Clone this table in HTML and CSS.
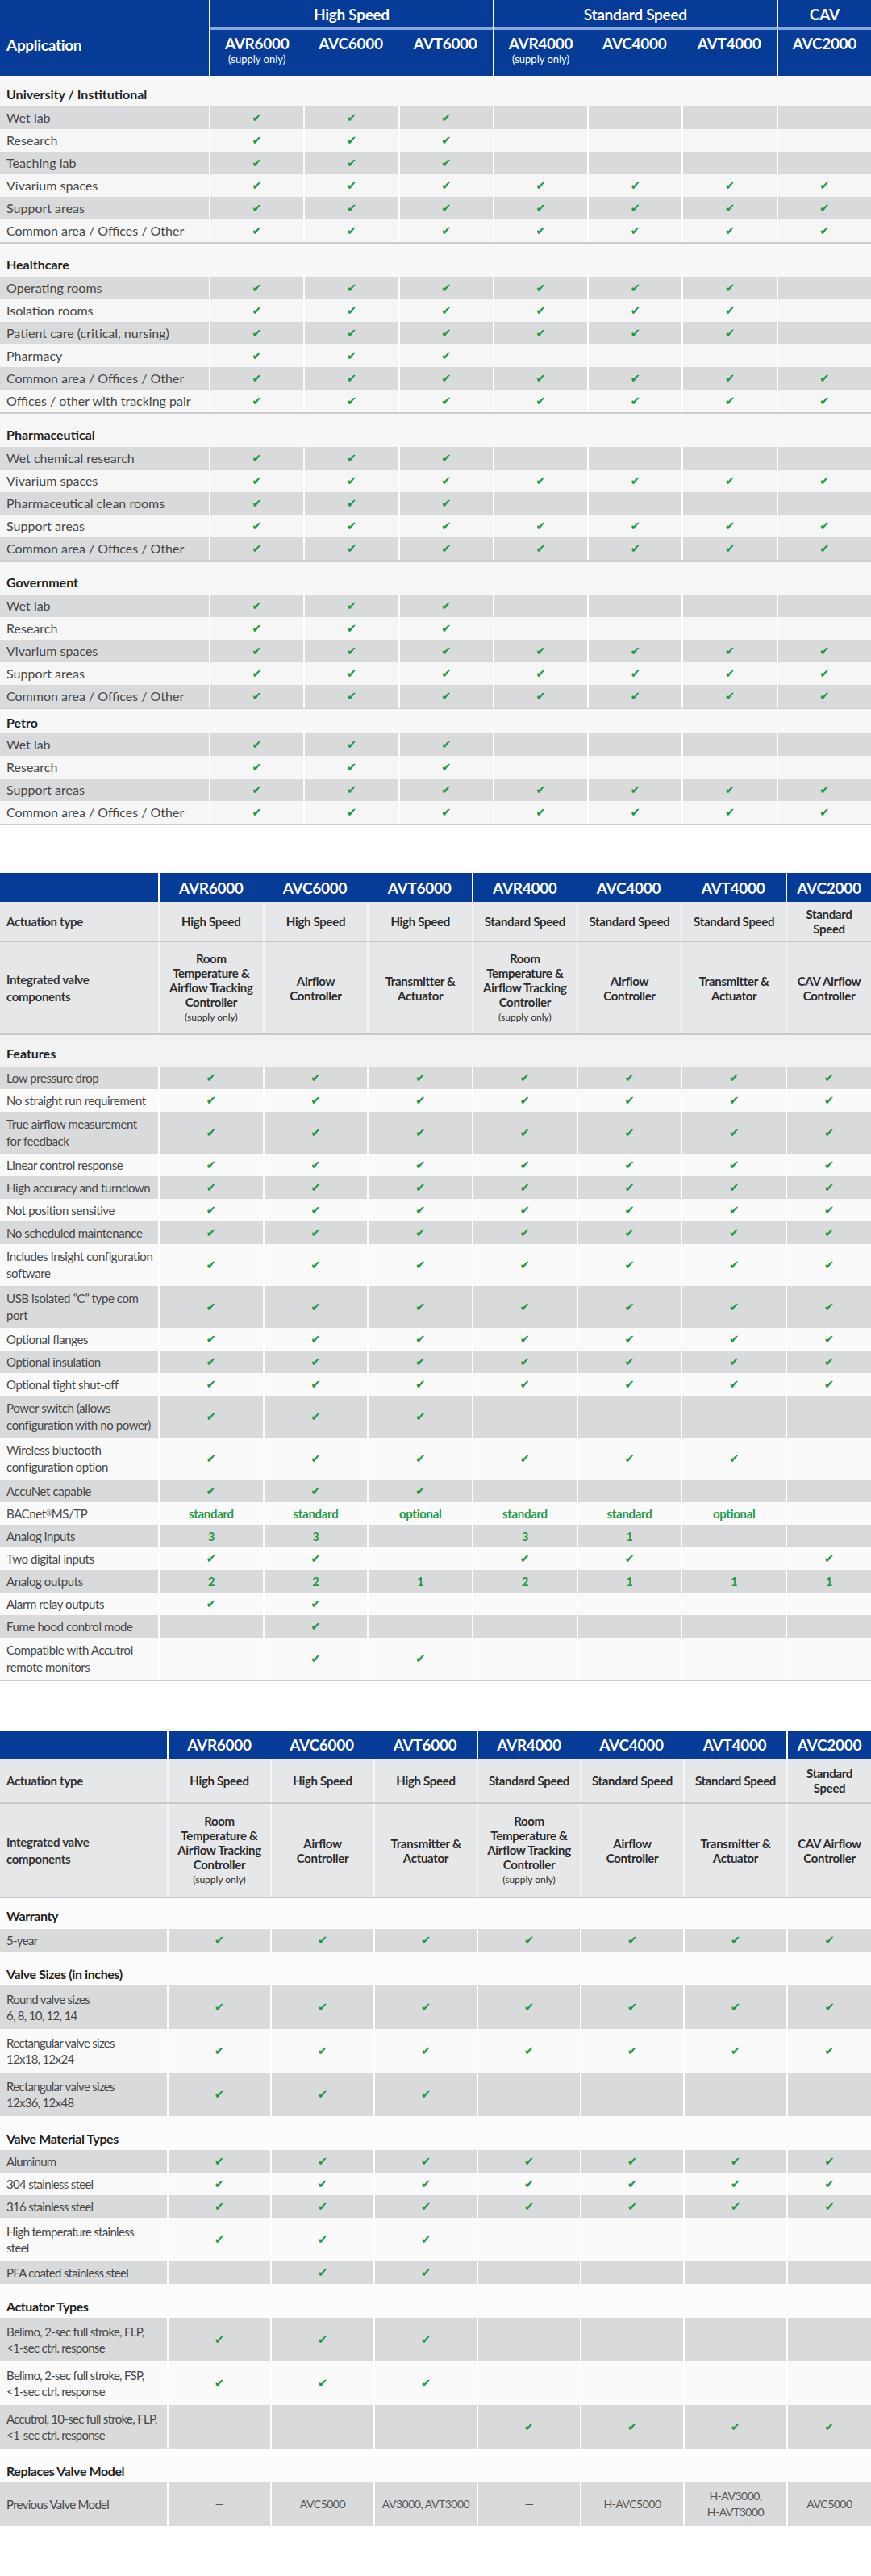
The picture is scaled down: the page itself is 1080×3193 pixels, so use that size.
FILE: index.html
```html
<!DOCTYPE html>
<html lang="en">
<head>
<meta charset="utf-8">
<title>Valve comparison</title>
<link rel="stylesheet" href="styles.css">
</head>
<body>

<section class="tbl t1">
  <div class="hdr1">
    <div class="h-app">Application</div>
    <div class="h-grp gs s3">High Speed</div>
    <div class="h-grp gs s3">Standard Speed</div>
    <div class="h-grp gs">CAV</div>
    <div class="h-mod gs">AVR6000<small>(supply only)</small></div>
    <div class="h-mod">AVC6000</div>
    <div class="h-mod">AVT6000</div>
    <div class="h-mod gs">AVR4000<small>(supply only)</small></div>
    <div class="h-mod">AVC4000</div>
    <div class="h-mod">AVT4000</div>
    <div class="h-mod gs">AVC2000</div>
  </div>

  <div class="grp">
    <div class="sec first">University / Institutional</div>
    <div class="row g"><span class="lab">Wet lab</span><span class="c">✔</span><span class="c">✔</span><span class="c">✔</span><span class="c"></span><span class="c"></span><span class="c"></span><span class="c"></span></div>
    <div class="row w"><span class="lab">Research</span><span class="c">✔</span><span class="c">✔</span><span class="c">✔</span><span class="c"></span><span class="c"></span><span class="c"></span><span class="c"></span></div>
    <div class="row g"><span class="lab">Teaching lab</span><span class="c">✔</span><span class="c">✔</span><span class="c">✔</span><span class="c"></span><span class="c"></span><span class="c"></span><span class="c"></span></div>
    <div class="row w"><span class="lab">Vivarium spaces</span><span class="c">✔</span><span class="c">✔</span><span class="c">✔</span><span class="c">✔</span><span class="c">✔</span><span class="c">✔</span><span class="c">✔</span></div>
    <div class="row g"><span class="lab">Support areas</span><span class="c">✔</span><span class="c">✔</span><span class="c">✔</span><span class="c">✔</span><span class="c">✔</span><span class="c">✔</span><span class="c">✔</span></div>
    <div class="row w"><span class="lab">Common area / Offices / Other</span><span class="c">✔</span><span class="c">✔</span><span class="c">✔</span><span class="c">✔</span><span class="c">✔</span><span class="c">✔</span><span class="c">✔</span></div>
  </div>

  <div class="grp">
    <div class="sec">Healthcare</div>
    <div class="row g"><span class="lab">Operating rooms</span><span class="c">✔</span><span class="c">✔</span><span class="c">✔</span><span class="c">✔</span><span class="c">✔</span><span class="c">✔</span><span class="c"></span></div>
    <div class="row w"><span class="lab">Isolation rooms</span><span class="c">✔</span><span class="c">✔</span><span class="c">✔</span><span class="c">✔</span><span class="c">✔</span><span class="c">✔</span><span class="c"></span></div>
    <div class="row g"><span class="lab">Patient care (critical, nursing)</span><span class="c">✔</span><span class="c">✔</span><span class="c">✔</span><span class="c">✔</span><span class="c">✔</span><span class="c">✔</span><span class="c"></span></div>
    <div class="row w"><span class="lab">Pharmacy</span><span class="c">✔</span><span class="c">✔</span><span class="c">✔</span><span class="c"></span><span class="c"></span><span class="c"></span><span class="c"></span></div>
    <div class="row g"><span class="lab">Common area / Offices / Other</span><span class="c">✔</span><span class="c">✔</span><span class="c">✔</span><span class="c">✔</span><span class="c">✔</span><span class="c">✔</span><span class="c">✔</span></div>
    <div class="row w"><span class="lab">Offices / other with tracking pair</span><span class="c">✔</span><span class="c">✔</span><span class="c">✔</span><span class="c">✔</span><span class="c">✔</span><span class="c">✔</span><span class="c">✔</span></div>
  </div>

  <div class="grp">
    <div class="sec">Pharmaceutical</div>
    <div class="row g"><span class="lab">Wet chemical research</span><span class="c">✔</span><span class="c">✔</span><span class="c">✔</span><span class="c"></span><span class="c"></span><span class="c"></span><span class="c"></span></div>
    <div class="row w"><span class="lab">Vivarium spaces</span><span class="c">✔</span><span class="c">✔</span><span class="c">✔</span><span class="c">✔</span><span class="c">✔</span><span class="c">✔</span><span class="c">✔</span></div>
    <div class="row g"><span class="lab">Pharmaceutical clean rooms</span><span class="c">✔</span><span class="c">✔</span><span class="c">✔</span><span class="c"></span><span class="c"></span><span class="c"></span><span class="c"></span></div>
    <div class="row w"><span class="lab">Support areas</span><span class="c">✔</span><span class="c">✔</span><span class="c">✔</span><span class="c">✔</span><span class="c">✔</span><span class="c">✔</span><span class="c">✔</span></div>
    <div class="row g"><span class="lab">Common area / Offices / Other</span><span class="c">✔</span><span class="c">✔</span><span class="c">✔</span><span class="c">✔</span><span class="c">✔</span><span class="c">✔</span><span class="c">✔</span></div>
  </div>

  <div class="grp">
    <div class="sec">Government</div>
    <div class="row g"><span class="lab">Wet lab</span><span class="c">✔</span><span class="c">✔</span><span class="c">✔</span><span class="c"></span><span class="c"></span><span class="c"></span><span class="c"></span></div>
    <div class="row w"><span class="lab">Research</span><span class="c">✔</span><span class="c">✔</span><span class="c">✔</span><span class="c"></span><span class="c"></span><span class="c"></span><span class="c"></span></div>
    <div class="row g"><span class="lab">Vivarium spaces</span><span class="c">✔</span><span class="c">✔</span><span class="c">✔</span><span class="c">✔</span><span class="c">✔</span><span class="c">✔</span><span class="c">✔</span></div>
    <div class="row w"><span class="lab">Support areas</span><span class="c">✔</span><span class="c">✔</span><span class="c">✔</span><span class="c">✔</span><span class="c">✔</span><span class="c">✔</span><span class="c">✔</span></div>
    <div class="row g"><span class="lab">Common area / Offices / Other</span><span class="c">✔</span><span class="c">✔</span><span class="c">✔</span><span class="c">✔</span><span class="c">✔</span><span class="c">✔</span><span class="c">✔</span></div>
  </div>

  <div class="grp">
    <div class="sec short">Petro</div>
    <div class="row g"><span class="lab">Wet lab</span><span class="c">✔</span><span class="c">✔</span><span class="c">✔</span><span class="c"></span><span class="c"></span><span class="c"></span><span class="c"></span></div>
    <div class="row w"><span class="lab">Research</span><span class="c">✔</span><span class="c">✔</span><span class="c">✔</span><span class="c"></span><span class="c"></span><span class="c"></span><span class="c"></span></div>
    <div class="row g"><span class="lab">Support areas</span><span class="c">✔</span><span class="c">✔</span><span class="c">✔</span><span class="c">✔</span><span class="c">✔</span><span class="c">✔</span><span class="c">✔</span></div>
    <div class="row w"><span class="lab">Common area / Offices / Other</span><span class="c">✔</span><span class="c">✔</span><span class="c">✔</span><span class="c">✔</span><span class="c">✔</span><span class="c">✔</span><span class="c">✔</span></div>
  </div>
</section>

<section class="tbl t2">
  <div class="hdr2">
    <span class="hb"></span>
    <span class="hb gs">AVR6000</span><span class="hb">AVC6000</span><span class="hb">AVT6000</span>
    <span class="hb gs">AVR4000</span><span class="hb">AVC4000</span><span class="hb">AVT4000</span>
    <span class="hb gs">AVC2000</span>
  </div>
  <div class="spec act">
    <span class="slab">Actuation type</span>
    <span>High Speed</span><span>High Speed</span><span>High Speed</span>
    <span>Standard Speed</span><span>Standard Speed</span><span>Standard Speed</span>
    <span>Standard<br>Speed</span>
  </div>
  <div class="spec integ">
    <span class="slab">Integrated valve<br>components</span>
    <span>Room<br>Temperature &amp;<br>Airflow Tracking<br>Controller<small>(supply only)</small></span>
    <span>Airflow<br>Controller</span>
    <span>Transmitter &amp;<br>Actuator</span>
    <span>Room<br>Temperature &amp;<br>Airflow Tracking<br>Controller<small>(supply only)</small></span>
    <span>Airflow<br>Controller</span>
    <span>Transmitter &amp;<br>Actuator</span>
    <span>CAV Airflow<br>Controller</span>
  </div>

  <div class="grp">
    <div class="sec feat">Features</div>
    <div class="row g"><span class="lab">Low pressure drop</span><span class="c">✔</span><span class="c">✔</span><span class="c">✔</span><span class="c">✔</span><span class="c">✔</span><span class="c">✔</span><span class="c">✔</span></div>
    <div class="row w"><span class="lab">No straight run requirement</span><span class="c">✔</span><span class="c">✔</span><span class="c">✔</span><span class="c">✔</span><span class="c">✔</span><span class="c">✔</span><span class="c">✔</span></div>
    <div class="row g tall"><span class="lab">True airflow measurement<br>for feedback</span><span class="c">✔</span><span class="c">✔</span><span class="c">✔</span><span class="c">✔</span><span class="c">✔</span><span class="c">✔</span><span class="c">✔</span></div>
    <div class="row w"><span class="lab">Linear control response</span><span class="c">✔</span><span class="c">✔</span><span class="c">✔</span><span class="c">✔</span><span class="c">✔</span><span class="c">✔</span><span class="c">✔</span></div>
    <div class="row g"><span class="lab">High accuracy and turndown</span><span class="c">✔</span><span class="c">✔</span><span class="c">✔</span><span class="c">✔</span><span class="c">✔</span><span class="c">✔</span><span class="c">✔</span></div>
    <div class="row w"><span class="lab">Not position sensitive</span><span class="c">✔</span><span class="c">✔</span><span class="c">✔</span><span class="c">✔</span><span class="c">✔</span><span class="c">✔</span><span class="c">✔</span></div>
    <div class="row g"><span class="lab">No scheduled maintenance</span><span class="c">✔</span><span class="c">✔</span><span class="c">✔</span><span class="c">✔</span><span class="c">✔</span><span class="c">✔</span><span class="c">✔</span></div>
    <div class="row w tall"><span class="lab">Includes Insight configuration<br>software</span><span class="c">✔</span><span class="c">✔</span><span class="c">✔</span><span class="c">✔</span><span class="c">✔</span><span class="c">✔</span><span class="c">✔</span></div>
    <div class="row g tall"><span class="lab">USB isolated “C” type com<br>port</span><span class="c">✔</span><span class="c">✔</span><span class="c">✔</span><span class="c">✔</span><span class="c">✔</span><span class="c">✔</span><span class="c">✔</span></div>
    <div class="row w"><span class="lab">Optional flanges</span><span class="c">✔</span><span class="c">✔</span><span class="c">✔</span><span class="c">✔</span><span class="c">✔</span><span class="c">✔</span><span class="c">✔</span></div>
    <div class="row g"><span class="lab">Optional insulation</span><span class="c">✔</span><span class="c">✔</span><span class="c">✔</span><span class="c">✔</span><span class="c">✔</span><span class="c">✔</span><span class="c">✔</span></div>
    <div class="row w"><span class="lab">Optional tight shut-off</span><span class="c">✔</span><span class="c">✔</span><span class="c">✔</span><span class="c">✔</span><span class="c">✔</span><span class="c">✔</span><span class="c">✔</span></div>
    <div class="row g tall"><span class="lab">Power switch (allows<br>configuration with no power)</span><span class="c">✔</span><span class="c">✔</span><span class="c">✔</span><span class="c"></span><span class="c"></span><span class="c"></span><span class="c"></span></div>
    <div class="row w tall"><span class="lab">Wireless bluetooth<br>configuration option</span><span class="c">✔</span><span class="c">✔</span><span class="c">✔</span><span class="c">✔</span><span class="c">✔</span><span class="c">✔</span><span class="c"></span></div>
    <div class="row g"><span class="lab">AccuNet capable</span><span class="c">✔</span><span class="c">✔</span><span class="c">✔</span><span class="c"></span><span class="c"></span><span class="c"></span><span class="c"></span></div>
    <div class="row w"><span class="lab">BACnet<sup>®</sup> MS/TP</span><span class="c gt">standard</span><span class="c gt">standard</span><span class="c gt">optional</span><span class="c gt">standard</span><span class="c gt">standard</span><span class="c gt">optional</span><span class="c"></span></div>
    <div class="row g"><span class="lab">Analog inputs</span><span class="c gt">3</span><span class="c gt">3</span><span class="c"></span><span class="c gt">3</span><span class="c gt">1</span><span class="c"></span><span class="c"></span></div>
    <div class="row w"><span class="lab">Two digital inputs</span><span class="c">✔</span><span class="c">✔</span><span class="c"></span><span class="c">✔</span><span class="c">✔</span><span class="c"></span><span class="c">✔</span></div>
    <div class="row g"><span class="lab">Analog outputs</span><span class="c gt">2</span><span class="c gt">2</span><span class="c gt">1</span><span class="c gt">2</span><span class="c gt">1</span><span class="c gt">1</span><span class="c gt">1</span></div>
    <div class="row w"><span class="lab">Alarm relay outputs</span><span class="c">✔</span><span class="c">✔</span><span class="c"></span><span class="c"></span><span class="c"></span><span class="c"></span><span class="c"></span></div>
    <div class="row g"><span class="lab">Fume hood control mode</span><span class="c"></span><span class="c">✔</span><span class="c"></span><span class="c"></span><span class="c"></span><span class="c"></span><span class="c"></span></div>
    <div class="row w tall"><span class="lab">Compatible with Accutrol<br>remote monitors</span><span class="c"></span><span class="c">✔</span><span class="c">✔</span><span class="c"></span><span class="c"></span><span class="c"></span><span class="c"></span></div>
  </div>
</section>

<section class="tbl t3">
  <div class="hdr2">
    <span class="hb"></span>
    <span class="hb gs">AVR6000</span><span class="hb">AVC6000</span><span class="hb">AVT6000</span>
    <span class="hb gs">AVR4000</span><span class="hb">AVC4000</span><span class="hb">AVT4000</span>
    <span class="hb gs">AVC2000</span>
  </div>
  <div class="spec act">
    <span class="slab">Actuation type</span>
    <span>High Speed</span><span>High Speed</span><span>High Speed</span>
    <span>Standard Speed</span><span>Standard Speed</span><span>Standard Speed</span>
    <span>Standard<br>Speed</span>
  </div>
  <div class="spec integ">
    <span class="slab">Integrated valve<br>components</span>
    <span>Room<br>Temperature &amp;<br>Airflow Tracking<br>Controller<small>(supply only)</small></span>
    <span>Airflow<br>Controller</span>
    <span>Transmitter &amp;<br>Actuator</span>
    <span>Room<br>Temperature &amp;<br>Airflow Tracking<br>Controller<small>(supply only)</small></span>
    <span>Airflow<br>Controller</span>
    <span>Transmitter &amp;<br>Actuator</span>
    <span>CAV Airflow<br>Controller</span>
  </div>

  <div class="grp3">
    <div class="sec first">Warranty</div>
    <div class="row g"><span class="lab">5-year</span><span class="c">✔</span><span class="c">✔</span><span class="c">✔</span><span class="c">✔</span><span class="c">✔</span><span class="c">✔</span><span class="c">✔</span></div>
  </div>

  <div class="grp3">
    <div class="sec">Valve Sizes (in inches)</div>
    <div class="row g tall"><span class="lab">Round valve sizes<br>6, 8, 10, 12, 14</span><span class="c">✔</span><span class="c">✔</span><span class="c">✔</span><span class="c">✔</span><span class="c">✔</span><span class="c">✔</span><span class="c">✔</span></div>
    <div class="row w tall"><span class="lab">Rectangular valve sizes<br>12x18, 12x24</span><span class="c">✔</span><span class="c">✔</span><span class="c">✔</span><span class="c">✔</span><span class="c">✔</span><span class="c">✔</span><span class="c">✔</span></div>
    <div class="row g tall"><span class="lab">Rectangular valve sizes<br>12x36, 12x48</span><span class="c">✔</span><span class="c">✔</span><span class="c">✔</span><span class="c"></span><span class="c"></span><span class="c"></span><span class="c"></span></div>
  </div>

  <div class="grp3">
    <div class="sec">Valve Material Types</div>
    <div class="row g"><span class="lab">Aluminum</span><span class="c">✔</span><span class="c">✔</span><span class="c">✔</span><span class="c">✔</span><span class="c">✔</span><span class="c">✔</span><span class="c">✔</span></div>
    <div class="row w"><span class="lab">304 stainless steel</span><span class="c">✔</span><span class="c">✔</span><span class="c">✔</span><span class="c">✔</span><span class="c">✔</span><span class="c">✔</span><span class="c">✔</span></div>
    <div class="row g"><span class="lab">316 stainless steel</span><span class="c">✔</span><span class="c">✔</span><span class="c">✔</span><span class="c">✔</span><span class="c">✔</span><span class="c">✔</span><span class="c">✔</span></div>
    <div class="row w tall"><span class="lab">High temperature stainless<br>steel</span><span class="c">✔</span><span class="c">✔</span><span class="c">✔</span><span class="c"></span><span class="c"></span><span class="c"></span><span class="c"></span></div>
    <div class="row g"><span class="lab">PFA coated stainless steel</span><span class="c"></span><span class="c">✔</span><span class="c">✔</span><span class="c"></span><span class="c"></span><span class="c"></span><span class="c"></span></div>
  </div>

  <div class="grp3">
    <div class="sec">Actuator Types</div>
    <div class="row g tall"><span class="lab">Belimo, 2-sec full stroke, FLP,<br>&lt;1-sec ctrl. response</span><span class="c">✔</span><span class="c">✔</span><span class="c">✔</span><span class="c"></span><span class="c"></span><span class="c"></span><span class="c"></span></div>
    <div class="row w tall"><span class="lab">Belimo, 2-sec full stroke, FSP,<br>&lt;1-sec ctrl. response</span><span class="c">✔</span><span class="c">✔</span><span class="c">✔</span><span class="c"></span><span class="c"></span><span class="c"></span><span class="c"></span></div>
    <div class="row g tall"><span class="lab">Accutrol, 10-sec full stroke, FLP,<br>&lt;1-sec ctrl. response</span><span class="c"></span><span class="c"></span><span class="c"></span><span class="c">✔</span><span class="c">✔</span><span class="c">✔</span><span class="c">✔</span></div>
  </div>

  <div class="grp3">
    <div class="sec">Replaces Valve Model</div>
    <div class="row g tall"><span class="lab">Previous Valve Model</span><span class="c v">—</span><span class="c v">AVC5000</span><span class="c v">AV3000, AVT3000</span><span class="c v">—</span><span class="c v">H-AVC5000</span><span class="c v">H-AV3000,<br>H-AVT3000</span><span class="c v">AVC5000</span></div>
  </div>
</section>

</body>
</html>
```

FILE: styles.css
```css
* { box-sizing: border-box; margin: 0; padding: 0; }

body {
  width: 1080px;
  background: #ffffff;
  font-family: Lato, "Open Sans", "Liberation Sans", sans-serif;
  color: #4b4b4b;
}

.tbl { margin-bottom: 59px; }
.t2 { margin-bottom: 61px; }
.t3 { margin-bottom: 60px; }

/* ---------- column templates ---------- */
.t1 .hdr1,
.t1 .row { grid-template-columns: 259px repeat(7, minmax(0, 1fr)); }
.t2 .hdr2,
.t2 .spec,
.t2 .row { grid-template-columns: 196px repeat(6, minmax(0, 1fr)) 106px; }
.t3 .hdr2,
.t3 .spec,
.t3 .row { grid-template-columns: 207px repeat(6, minmax(0, 1fr)) 105px; }

/* ---------- blue headers ---------- */
.hdr1 {
  display: grid;
  grid-template-rows: 37px 57px;
  background: #063b98;
  color: #fff;
  font-weight: 700;
  font-size: 19px;
  letter-spacing: -0.3px;
}
.h-app {
  grid-row: span 2;
  display: flex;
  align-items: center;
  padding: 16px 0 0 8px;
}
.s3 { grid-column: span 3; }
.h-grp {
  display: flex;
  align-items: center;
  justify-content: center;
  border-bottom: 3px solid #86a8dc;
}
.h-mod {
  display: flex;
  flex-direction: column;
  align-items: center;
  padding-top: 6px;
  line-height: 22px;
}
.h-mod small {
  font-size: 13px;
  font-weight: 400;
  line-height: 16px;
  letter-spacing: 0;
}
.gs { border-left: 2px solid #fff; }

.hdr2 {
  display: grid;
  height: 36px;
  background: #063b98;
  color: #fff;
  font-weight: 700;
  font-size: 19px;
  letter-spacing: -0.3px;
}
.t3 .hdr2 { height: 35px; }
.hb {
  display: flex;
  align-items: center;
  justify-content: center;
}

/* ---------- spec rows (actuation / components) ---------- */
.spec {
  display: grid;
  border-bottom: 2px solid #c8c9ca;
  font-weight: 700;
  font-size: 15px;
  letter-spacing: -0.3px;
  line-height: 18px;
  color: #2b2b2b;
}
.spec > span {
  display: flex;
  flex-direction: column;
  align-items: center;
  justify-content: center;
  text-align: center;
  background: #e6e7e8;
  border-left: 2px solid #f7f7f7;
}
.spec > .slab {
  align-items: flex-start;
  text-align: left;
  padding-left: 8px;
  border-left: 0;
  color: #333;
  line-height: 21px;
}
.spec small {
  font-size: 12px;
  font-weight: 400;
  letter-spacing: 0;
  line-height: 20px;
}
.t2 .act { height: 50px; }
.t2 .integ { height: 115px; }
.t3 .act { height: 56px; }
.t3 .integ { height: 117px; }

/* ---------- section headings ---------- */
.grp { border-bottom: 2px solid #cbcccd; }
.sec {
  height: 41px;
  display: flex;
  align-items: flex-end;
  padding: 0 8px 6px;
  font-size: 16px;
  font-weight: 700;
  color: #1f1f1f;
  background: #f7f7f7;
}
.sec.first { height: 38px; }
.sec.short { height: 30px; padding-bottom: 4px; }
.sec.feat { height: 39px; padding-bottom: 7px; background: #f2f2f2; }
.t3 .sec {
  height: 42px;
  background: #fcfcfc;
  font-size: 16px;
  letter-spacing: -0.4px;
  padding-bottom: 5px;
}
.t3 .sec.first { height: 38px; padding-bottom: 7px; }

/* ---------- data rows ---------- */
.row {
  display: grid;
  height: 28px;
}
.row.tall { height: 52px; }
.t3 .row.tall { height: 54px; }

.row > span {
  display: flex;
  align-items: center;
  justify-content: center;
  text-align: center;
  border-left: 2px solid #fff;
}
.row > .lab {
  justify-content: flex-start;
  text-align: left;
  border-left: 0;
  padding-left: 8px;
  font-size: 16px;
  line-height: 20px;
  color: #474747;
  white-space: nowrap;
}
.t2 .row > .lab { font-size: 15px; letter-spacing: -0.4px; line-height: 21px; }
.t3 .row > .lab { font-size: 15px; letter-spacing: -0.7px; line-height: 20px; }
.lab sup { font-size: 9px; line-height: 0; }

.row.g > span { background: #d9dadb; }
.row.w > span { background: #f6f6f6; }
.t2 .row.w > span,
.t3 .row.w > span { background: #fafafa; }

.c {
  color: #1d9946;
  font-family: "DejaVu Sans", sans-serif;
  font-size: 15px;
}
.c.gt {
  font-family: Lato, "Open Sans", sans-serif;
  font-weight: 700;
  font-size: 15px;
  letter-spacing: -0.3px;
  color: #1f9a47;
}
.c.v {
  font-family: Lato, "Open Sans", sans-serif;
  font-size: 14px;
  letter-spacing: -0.5px;
  line-height: 20px;
  color: #555;
}
```
